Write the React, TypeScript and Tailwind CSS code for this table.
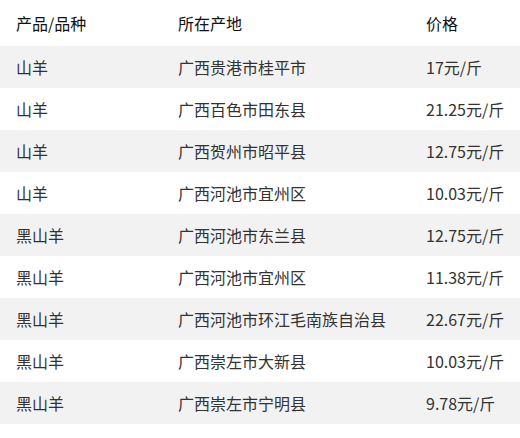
const rows: [string, string, string][] = [
  ["山羊", "广西贵港市桂平市", "17元/斤"],
  ["山羊", "广西百色市田东县", "21.25元/斤"],
  ["山羊", "广西贺州市昭平县", "12.75元/斤"],
  ["山羊", "广西河池市宜州区", "10.03元/斤"],
  ["黑山羊", "广西河池市东兰县", "12.75元/斤"],
  ["黑山羊", "广西河池市宜州区", "11.38元/斤"],
  ["黑山羊", "广西河池市环江毛南族自治县", "22.67元/斤"],
  ["黑山羊", "广西崇左市大新县", "10.03元/斤"],
  ["黑山羊", "广西崇左市宁明县", "9.78元/斤"],
];

export default function App() {
  return (
    <div
      className="w-[520px] h-[438px] bg-white text-[16px]"
      style={{ fontFamily: '"Noto Sans CJK SC", "Noto Sans", sans-serif' }}
    >
      <div className="flex h-[46px] items-center pl-4 text-[#111]">
        <div className="w-[162px]">产品/品种</div>
        <div className="w-[248px]">所在产地</div>
        <div>价格</div>
      </div>
      {rows.map((r, i) => (
        <div
          key={i}
          className={`flex h-[42px] items-center pl-4 text-[#333] ${i % 2 === 0 ? "bg-[#f2f2f2]" : "bg-white"}`}
        >
          <div className="w-[162px]">{r[0]}</div>
          <div className="w-[248px]">{r[1]}</div>
          <div>{r[2]}</div>
        </div>
      ))}
    </div>
  );
}
